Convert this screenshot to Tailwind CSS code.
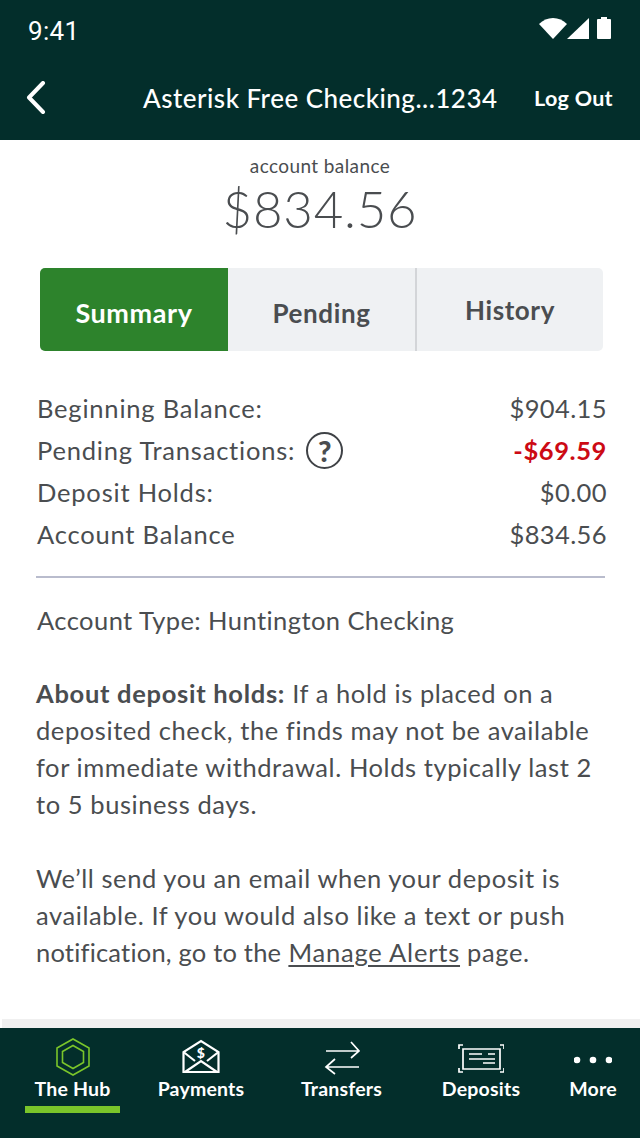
<!doctype html>
<html>
<head>
<meta charset="utf-8">
<script src="https://cdn.jsdelivr.net/npm/@tailwindcss/browser@4"></script>
</head>
<body class="bg-white">
<div class="w-[640px] h-[1138px] flex flex-col overflow-hidden font-['Lato',sans-serif] text-[#4a4d50]">

  <!-- status bar + title -->
  <div class="h-[140px] shrink-0 bg-[#032e2b] text-white">
    <div class="h-[62px] flex justify-between pl-[28px] pr-[28px] pt-[17px]">
      <span class="font-['Roboto',sans-serif] text-[26px] leading-[28px] tracking-[0.3px]">9:41</span>
      <svg class="w-[73px] h-[22px]" viewBox="0 0 73 22" fill="#fff">
        <path d="M0 7 Q6 1 14 1 Q22 1 28 7 L14 22Z"/>
        <path d="M28 22 L50 1 V22Z"/>
        <path d="M58 3 Q58 2 59 2 H62 V0 H68 V2 H71 Q72 2 72 3 V21 Q72 22 71 22 H59 Q58 22 58 21Z"/>
      </svg>
    </div>
    <div class="h-[72px] flex items-center">
      <svg class="w-[22px] h-[34px] ml-[25px]" viewBox="0 0 22 34" fill="none" stroke="#fff" stroke-width="4" stroke-linecap="round" stroke-linejoin="round"><path d="M18 2 L4 16.500 L18 31"/></svg>
      <span class="ml-[96px] w-[391px] text-[26px] font-medium leading-[36px] whitespace-nowrap tracking-[0.48px]">Asterisk Free Checking...1234</span>
      <span class="text-[21.500px] font-bold leading-[30px] whitespace-nowrap tracking-[0.3px]">Log Out</span>
    </div>
  </div>

  <!-- balance -->
  <div class="flex flex-col items-center pt-[14px]">
    <span class="text-[19px] leading-[24px] tracking-[0.4px]">account balance</span>
    <span class="text-[51px] leading-[50px] font-light tracking-[0.8px] mt-[6px]">$834.56</span>
  </div>

  <!-- tabs -->
  <div class="mt-[34px] mx-[40px] h-[83px] w-[563px] flex rounded-[5px] overflow-hidden bg-[#eff1f3] text-[26px] font-bold tracking-[0.6px]">
    <div class="w-[188px] bg-[#2d832c] text-white text-[27px] flex items-center justify-center pt-[8px]">Summary</div>
    <div class="w-[187px] flex items-center justify-center pt-[8px]">Pending</div>
    <div class="flex-1 border-l-2 border-[#d3d5d8] flex items-center justify-center pt-[2px]">History</div>
  </div>

  <!-- summary rows -->
  <div class="mt-[36px] ml-[37px] w-[570px] flex flex-col text-[25.500px] leading-[42px] tracking-[0.4px]">
    <div class="flex justify-between"><span class="tracking-[0.8px]">Beginning Balance:</span><span>$904.15</span></div>
    <div class="flex justify-between">
      <span class="flex items-center tracking-[0.8px]">Pending Transactions:
        <span class="ml-[11px] w-[37px] h-[37px] rounded-full border-2 border-[#3f4246] flex items-center justify-center text-[29px] font-black leading-none tracking-normal">?</span>
      </span>
      <span class="font-bold text-[#cc0a14] tracking-[0.6px]">-$69.59</span>
    </div>
    <div class="flex justify-between"><span class="tracking-[0.8px]">Deposit Holds:</span><span>$0.00</span></div>
    <div class="flex justify-between"><span class="tracking-[0.8px]">Account Balance</span><span>$834.56</span></div>
  </div>

  <div class="mt-[21px] ml-[36px] w-[569px] h-[2px] bg-[#b9bccd]"></div>

  <div class="mt-[21px] ml-[37px] text-[25.500px] leading-[42px] tracking-[0.43px]">Account Type: Huntington Checking</div>

  <div class="mt-[34px] ml-[36px] w-[570px] text-[25.500px] leading-[37px] tracking-[0.58px]">
    <p><b class="font-bold tracking-[0.7px]">About deposit holds:</b> If a hold is placed on a<br>deposited check, the finds may not be available<br>for immediate withdrawal. Holds typically last 2<br>to 5 business days.</p>
    <p class="mt-[37px]">We’ll send you an email when your deposit is<br>available. If you would also like a text or push<br><span class="tracking-[0.2px]">notification, go to the</span> <span class="underline underline-offset-[3px] tracking-[0.8px]">Manage Alerts</span> page.</p>
  </div>

  <div class="flex-1"></div>
  <div class="h-[9px] ml-[2px] bg-[#f0f0f0] shrink-0"></div>

  <!-- bottom nav -->
  <div class="h-[110px] shrink-0 bg-[#032e2b] text-white flex text-[19.500px] font-bold tracking-[0.2px]">
    <div class="w-[145px] flex flex-col items-center pt-[10px]">
      <svg class="w-[36px] h-[38px]" viewBox="0 0 36 38" fill="none" stroke="#7ac52a" stroke-width="1.600"><path d="M18 1 L34 10 V28 L18 37 L2 28 V10Z"/><path d="M18 7.500 L28.500 13.500 V24.500 L18 30.500 L7.500 24.500 V13.500Z"/></svg>
      <span class="leading-[24px] mt-[1px]">The Hub</span>
      <div class="w-[95px] h-[7px] bg-[#7ac52a] mt-[5px]"></div>
    </div>
    <div class="w-[112px] flex flex-col items-center pt-[10px]">
      <svg class="w-[38px] h-[38px]" viewBox="0 0 38 38" fill="none" stroke="#fff" stroke-width="2.200"><path d="M1.500 34 V14 L19 3 L36.500 14 V34Z"/><path d="M1.500 14 L13 23 M36.500 14 L25 23 M3 34 L19 23 L35 34"/><text x="19" y="20" text-anchor="middle" font-size="14" font-weight="900" fill="#fff" stroke="none">$</text></svg>
      <span class="leading-[24px] mt-[1px]">Payments</span>
    </div>
    <div class="w-[169px] flex flex-col items-center pt-[10px]">
      <svg class="w-[38px] h-[38px]" viewBox="0 0 38 38" fill="none" stroke="#fff" stroke-width="1.700"><path d="M3 13 H36 M28 4 L36 13 L28 20"/><path d="M36 29 H3 M12 21 L3 29 L12 36"/></svg>
      <span class="leading-[24px] mt-[1px]">Transfers</span>
    </div>
    <div class="w-[110px] flex flex-col items-center pt-[10px]">
      <svg class="w-[46px] h-[38px]" viewBox="0 0 46 38" fill="none" stroke="#fff" stroke-width="1.700"><path d="M1 11 V7 H5 M42 7 H46 V11 M46 30 V34 H42 M5 34 H1 V30"/><path d="M5 11 H42 V31 H5Z"/><path d="M11 16 H24 M30 16 H37 M11 21 H37 M25 25 H37" stroke-width="1.500"/></svg>
      <span class="leading-[24px] mt-[1px]">Deposits</span>
    </div>
    <div class="flex-1 flex flex-col items-center pt-[10px] pl-[10px]">
      <svg class="w-[38px] h-[38px]" viewBox="0 0 38 38" fill="#fff"><circle cx="3" cy="22" r="3.300"/><circle cx="19" cy="22" r="3.300"/><circle cx="35" cy="22" r="3.300"/></svg>
      <span class="leading-[24px] mt-[1px]">More</span>
    </div>
  </div>
</div>
</body>
</html>
